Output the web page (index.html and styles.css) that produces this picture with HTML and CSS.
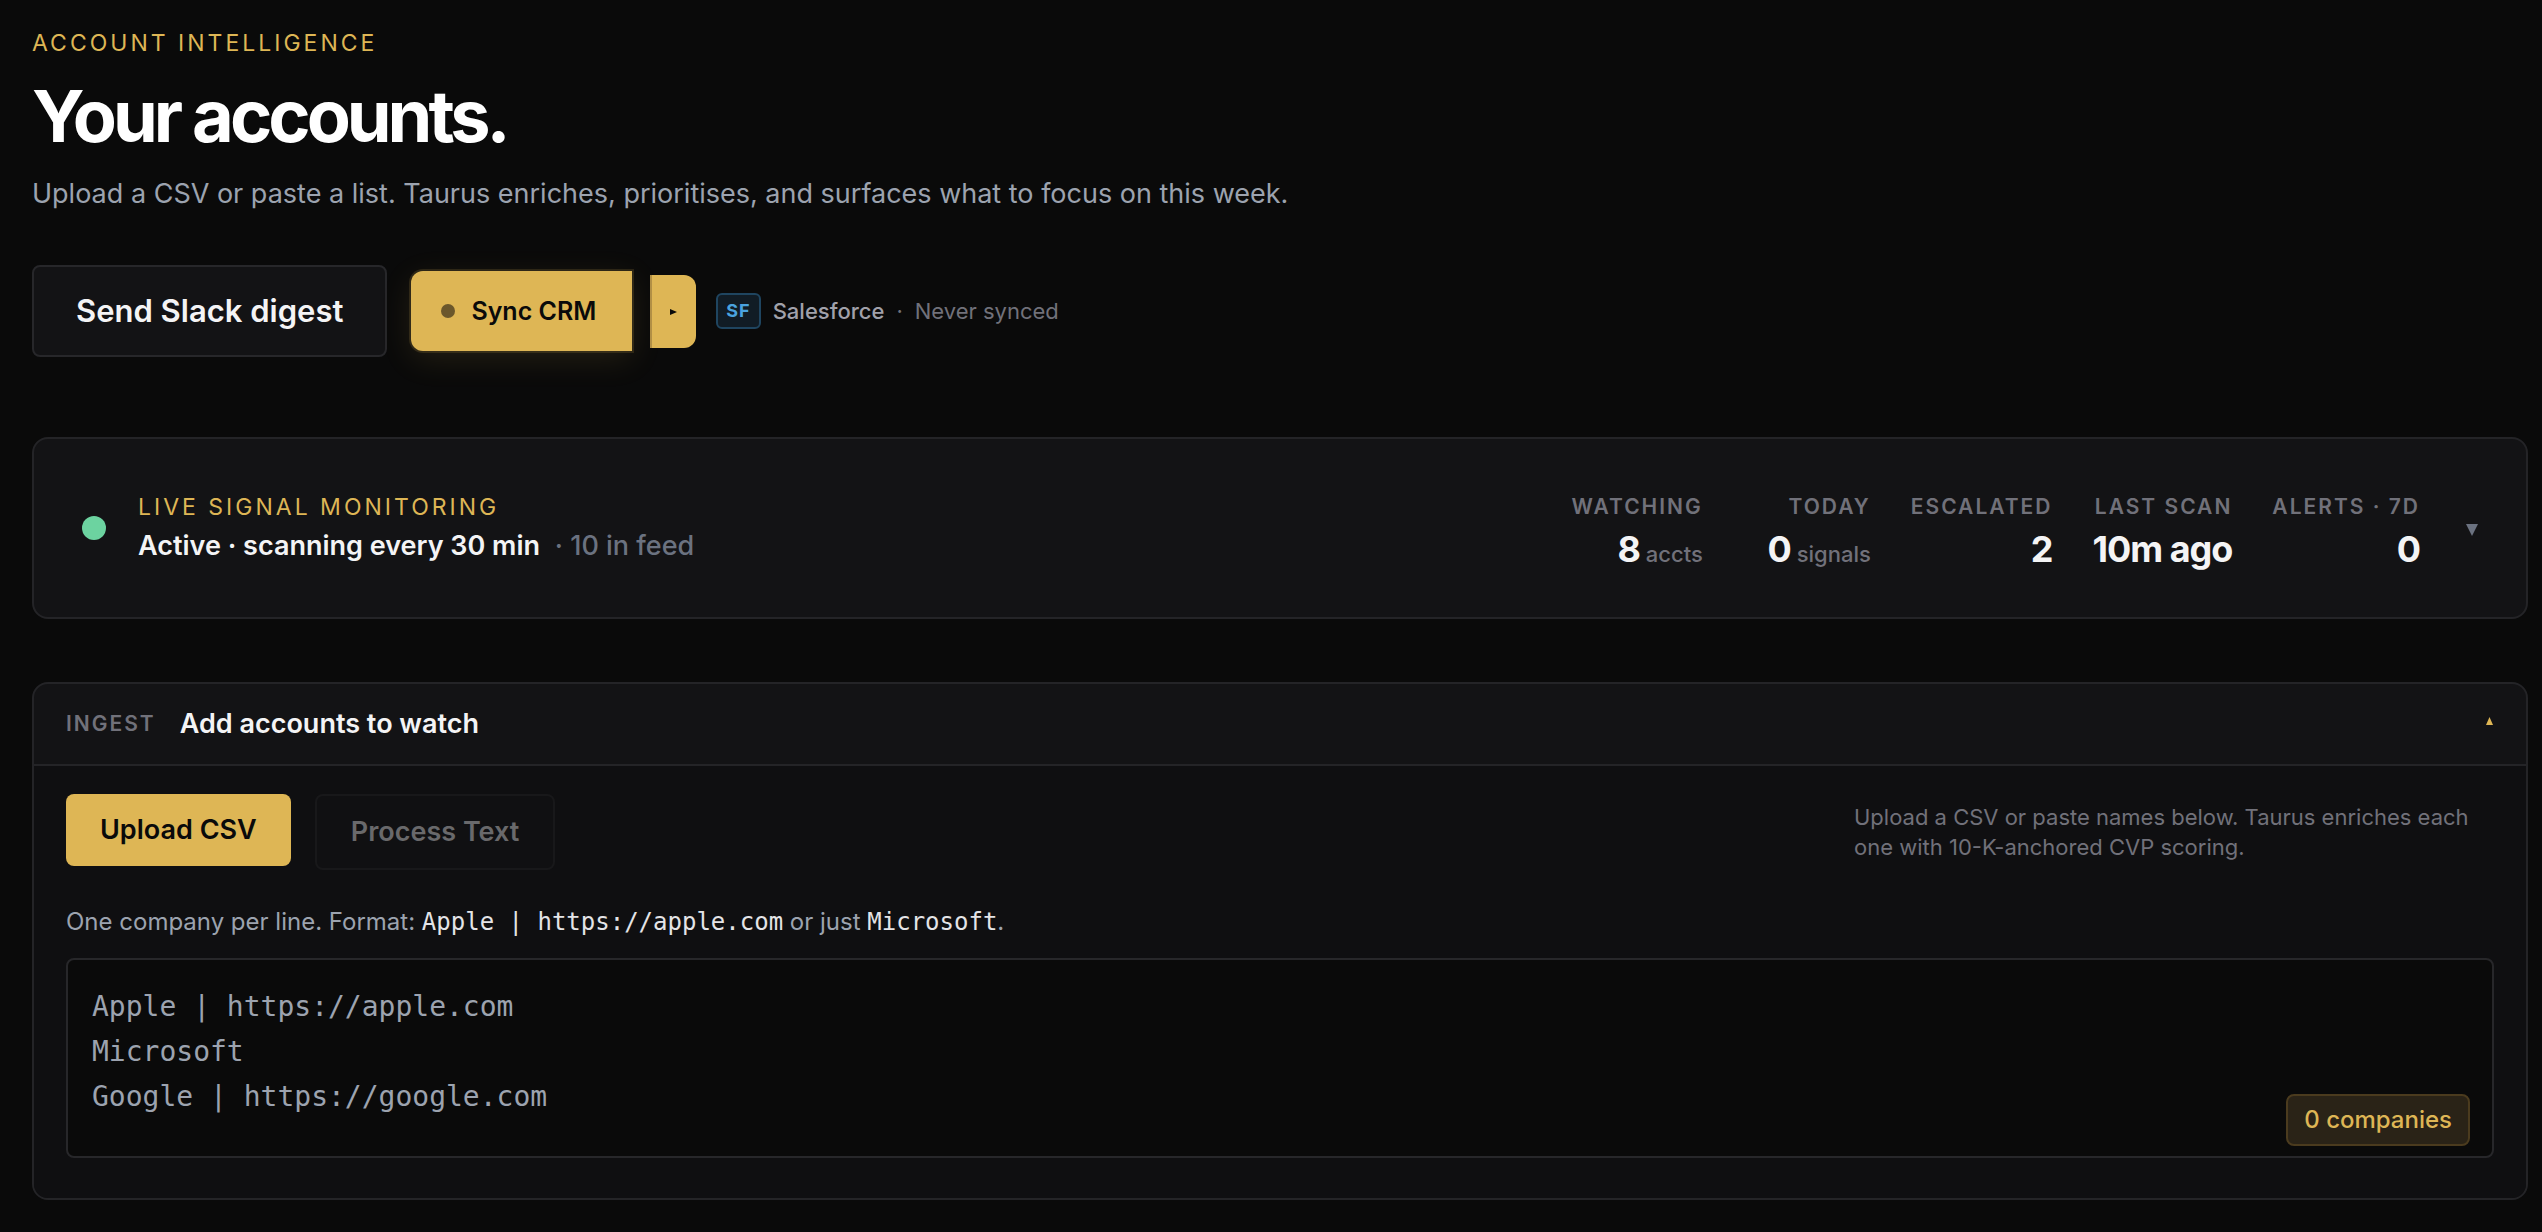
FILE: index.html
```html
<!doctype html>
<html lang="en">
	<head>
		<meta charset="utf-8">
		<title>Your accounts</title>
		<link rel="stylesheet" href="styles.css">
	</head>
	<body>
		<header class="intro">
			<p class="eyebrow">ACCOUNT INTELLIGENCE</p>
			<h1>Your accounts.</h1>
			<p class="subtitle">Upload a CSV or paste a list. Taurus enriches, prioritises, and surfaces what to focus on this week.</p>
		</header>

		<div class="actions">
			<button type="button" class="btn-digest">Send Slack digest</button>
			<div class="sync">
				<button type="button" class="btn-sync"><span class="sync-dot"></span>Sync CRM</button>
				<button type="button" class="btn-more" aria-label="Choose CRM">
					<svg width="8" height="8" viewBox="0 0 8 8"><path d="M0 1 7 4 0 7z" fill="currentColor"/></svg>
				</button>
			</div>
			<div class="crm">
				<span class="crm-badge">SF</span>
				<span class="crm-name">Salesforce</span>
				<span class="crm-sep">·</span>
				<span class="crm-state">Never synced</span>
			</div>
		</div>

		<section class="card monitor">
			<span class="live-dot"></span>
			<div class="monitor-text">
				<p class="eyebrow">LIVE SIGNAL MONITORING</p>
				<p class="status">Active · scanning every 30 min <span class="feed">· 10 in feed</span></p>
			</div>
			<dl class="stats">
				<div class="stat"><dt>WATCHING</dt><dd>8<small> accts</small></dd></div>
				<div class="stat"><dt>TODAY</dt><dd>0<small> signals</small></dd></div>
				<div class="stat"><dt>ESCALATED</dt><dd>2</dd></div>
				<div class="stat"><dt>LAST SCAN</dt><dd>10m ago</dd></div>
				<div class="stat"><dt>ALERTS · 7D</dt><dd>0</dd></div>
			</dl>
			<button type="button" class="toggle" aria-label="Expand monitoring">
				<svg width="12" height="16" viewBox="0 0 12 16"><path d="M0 4h12L6 16z" fill="currentColor"/></svg>
			</button>
		</section>

		<section class="card ingest">
			<div class="ingest-head">
				<span class="tag">INGEST</span>
				<h2>Add accounts to watch</h2>
				<button type="button" class="toggle gold" aria-label="Collapse ingest">
					<svg width="8" height="20" viewBox="0 0 8 20"><path d="M0 11h7L3.500 3z" fill="currentColor"/></svg>
				</button>
			</div>
			<div class="ingest-body">
				<div class="ingest-row">
					<button type="button" class="btn-upload">Upload CSV</button>
					<button type="button" class="btn-process" disabled>Process Text</button>
					<p class="help">Upload a CSV or paste names below. Taurus enriches each one with 10-K-anchored CVP scoring.</p>
				</div>
				<label class="format" for="companies">One company per line. Format: <code>Apple | https://apple.com</code> or just <code>Microsoft</code>.</label>
				<div class="field">
					<textarea id="companies" placeholder="Apple | https://apple.com&#10;Microsoft&#10;Google | https://google.com"></textarea>
					<span class="count">0 companies</span>
				</div>
			</div>
		</section>
	</body>
</html>
```
FILE: styles.css
```css
*{
	margin:0;
	padding:0;
	box-sizing:border-box;
}
body{
	padding:25px 14px 32px 32px;
	background-color:#0a0a0a;
	color:#f4f4f5;
	font-family:Inter, "Liberation Sans", sans-serif;
}
button{
	font-family:inherit;
	border:none;
	cursor:pointer;
}
svg{
	display:block;
}
.eyebrow{
	font-size:23px;
	line-height:36px;
	letter-spacing:3px;
	color:#deb655;
}
h1{
	margin:15px 0 16px;
	font-size:72px;
	line-height:80px;
	font-weight:700;
	letter-spacing:-4px;
	color:#fff;
}
.subtitle{
	font-size:27px;
	line-height:44px;
	color:#9ca3af;
}

/* action row */
.actions{
	display:flex;
	align-items:center;
	margin:49px 0 80px;
	gap:24px;
}
.btn-digest{
	padding:20px 42px;
	border:2px solid #27272a;
	border-radius:8px;
	background-color:#131315;
	color:#f4f4f5;
	font-size:31px;
	line-height:48px;
	font-weight:600;
}
.sync{
	display:flex;
	align-items:center;
	gap:18px;
}
.btn-sync{
	display:flex;
	align-items:center;
	gap:16px;
	padding:20px 36px 20px 30px;
	border-radius:12px 0 0 12px;
	background-color:#deb655;
	box-shadow:0 0 0 2px rgba(222,182,85,0.15), 0 8px 32px rgba(222,182,85,0.12);
	color:#0a0a0a;
	font-size:25px;
	line-height:40px;
	font-weight:600;
}
.sync-dot{
	width:14px;
	height:14px;
	border-radius:50%;
	background-color:#6b572b;
}
.btn-more{
	display:flex;
	align-items:center;
	padding:33px 18px 32px;
	border-left:2px solid #b18f45;
	border-radius:0 12px 12px 0;
	background-color:#deb655;
	color:#0a0a0a;
}
.crm{
	display:flex;
	align-items:center;
	gap:12px;
	margin-left:-4px;
	font-size:22px;
	line-height:32px;
	color:#71717a;
}
.crm-badge{
	padding:0 8px;
	border:2px solid #1f4560;
	border-radius:6px;
	background-color:#111c25;
	color:#4aa3df;
	font-size:18px;
	font-weight:700;
	letter-spacing:1px;
}
.crm-name{
	color:#a1a1aa;
	font-weight:500;
}

/* cards */
.card{
	border:2px solid #242427;
	border-radius:16px;
	background-color:#131315;
}
.monitor{
	display:flex;
	align-items:center;
	padding:50px 48px;
	margin-bottom:63px;
}
.live-dot{
	width:24px;
	height:24px;
	margin-right:32px;
	border-radius:50%;
	background-color:#6cd3a0;
}
.status{
	font-size:27px;
	line-height:42px;
	font-weight:600;
}
.feed{
	margin-left:8px;
	color:#6b7280;
	font-weight:500;
}
.stats{
	display:flex;
	gap:40px;
	margin-left:auto;
	padding-top:6px;
}
.stat{
	min-width:128px;
	text-align:right;
}
dt,.tag{
	font-size:21px;
	line-height:24px;
	font-weight:600;
	letter-spacing:2px;
	color:#71717a;
}
dd{
	margin-top:12px;
	font-size:36px;
	line-height:36px;
	font-weight:700;
	letter-spacing:-1px;
}
small{
	font-size:22px;
	line-height:22px;
	font-weight:500;
	letter-spacing:0;
	color:#71717a;
}
.toggle{
	margin-left:46px;
	background:none;
	color:#6b7280;
}
.gold{
	margin-left:auto;
	color:#deb655;
}
.ingest{
	overflow:hidden;
}
.ingest-head{
	display:flex;
	align-items:center;
	gap:24px;
	padding:19px 32px;
	border-bottom:2px solid #242427;
}
h2{
	font-size:27px;
	line-height:42px;
	font-weight:600;
}
.ingest-body{
	padding:28px 32px 40px;
	background-color:#0f0f11;
}
.ingest-row{
	display:flex;
	align-items:flex-start;
	gap:24px;
}
.btn-upload,.btn-process{
	padding:15px 34px;
	border-radius:8px;
	font-size:27px;
	line-height:42px;
	font-weight:600;
}
.btn-upload{
	background-color:#deb655;
	color:#0a0a0a;
}
.btn-process{
	border:2px solid #18181a;
	background-color:#101012;
	color:#69696b;
}
.help{
	max-width:640px;
	margin-left:auto;
	align-self:center;
	font-size:22px;
	line-height:30px;
	color:#71717a;
}
.format{
	display:block;
	margin:34px 0 18px;
	font-size:24px;
	line-height:36px;
	color:#9ca3af;
}
code{
	font-family:"DejaVu Sans Mono", monospace;
	font-size:24px;
	color:#e4e4e7;
}
.field{
	position:relative;
}
textarea{
	display:block;
	width:100%;
	height:200px;
	padding:24px;
	border:2px solid #27272a;
	border-radius:8px;
	background-color:#0a0a0a;
	color:#f4f4f5;
	font-family:"DejaVu Sans Mono", monospace;
	font-size:28px;
	line-height:45px;
	resize:none;
}
textarea::placeholder{
	color:#9ca3af;
}
.count{
	position:absolute;
	right:24px;
	bottom:12px;
	padding:6px 16px;
	border:2px solid #4b3b1e;
	border-radius:8px;
	background-color:#2a2317;
	color:#deb655;
	font-size:24px;
	line-height:36px;
	font-weight:500;
}
```
